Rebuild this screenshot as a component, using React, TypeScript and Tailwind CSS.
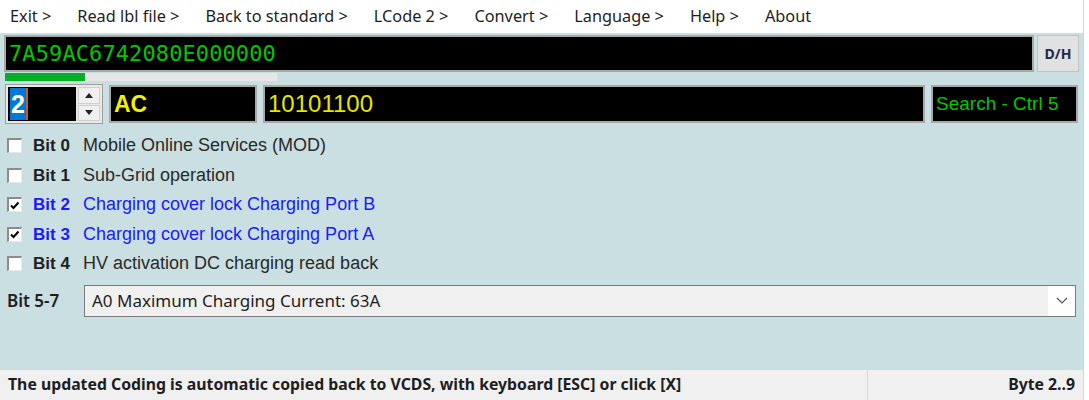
import React from 'react';

type Bit = { n: number; label: string; on: boolean };

const bits: Bit[] = [
  { n: 0, label: 'Mobile Online Services (MOD)', on: false },
  { n: 1, label: 'Sub-Grid operation', on: false },
  { n: 2, label: 'Charging cover lock Charging Port B', on: true },
  { n: 3, label: 'Charging cover lock Charging Port A', on: true },
  { n: 4, label: 'HV activation DC charging read back', on: false },
];

const menu = ['Exit >', 'Read lbl file >', 'Back to standard >', 'LCode 2 >', 'Convert >', 'Language >', 'Help >', 'About'];

const CheckBox = ({ on }: { on: boolean }) => (
  <div className="w-[15px] h-[15px] bg-white border-t-2 border-l-2 border-b border-r border-t-[#8c8c8c] border-l-[#8c8c8c] border-b-[#e8e8e8] border-r-[#e8e8e8] flex items-center justify-center">
    {on && (
      <svg width="10" height="9" viewBox="0 0 10 9">
        <path d="M1 4.5 L3.5 7 L8.5 1.5" fill="none" stroke="#000" strokeWidth="2" />
      </svg>
    )}
  </div>
);

export default function App() {
  return (
    <div className="w-[1089px] h-[400px] flex bg-white overflow-hidden" style={{ fontFamily: '"Noto Sans", sans-serif' }}>
      <div className="w-[1083px] h-full flex flex-col bg-[#c9dfe1]">
        {/* menu */}
        <div className="h-[33px] bg-white flex items-center pl-[10px] gap-[26px] text-[16.3px] text-[#1e1e1e]">
          {menu.map((m) => (
            <span key={m}>{m}</span>
          ))}
        </div>

        {/* coding string */}
        <div className="flex items-stretch gap-[3px] mt-[2px] pl-[4px] pr-[4px] h-[37px]">
          <div className="flex-1 bg-black border-2 border-[#a8a8a8] flex items-center pl-[3px] text-[#00c800] text-[22px] leading-none" style={{ fontFamily: '"DejaVu Sans Mono", monospace', letterSpacing: '0.1px' }}>
            7A59AC6742080E000000
          </div>
          <button className="w-[42px] bg-[#e1e1e1] border border-[#c4c4c4] font-bold text-[14px] text-[#1e2a48]">D/H</button>
        </div>

        {/* progress */}
        <div className="ml-[5px] mt-[1px] w-[272px] h-[8px] bg-[#e6e6e6] flex">
          <div className="w-[80px] h-full bg-[#06b025]" />
        </div>

        {/* byte row */}
        <div className="flex items-center mt-[3px] h-[40px] pl-[5px] pr-[5px] gap-[6px]" style={{ fontFamily: '"Liberation Sans", Arial, sans-serif' }}>
          <div className="w-[98px] h-[40px] border border-[#9e9e9e] bg-[#e8e8e8] flex items-center p-[2px] gap-[2px]">
            <div className="w-[68px] h-full bg-black flex items-center pl-[2px]">
              <span className="bg-[#0078d7] text-white font-bold text-[25px] leading-[32px] px-[1px]">2</span>
              <span className="w-[2px] h-[32px] bg-[#c06020]" />
            </div>
            <div className="flex flex-col gap-[1px] h-full w-[22px]">
              <div className="flex-1 bg-[#f0f0f0] border border-[#d0d0d0] flex items-center justify-center">
                <svg width="8" height="5" viewBox="0 0 8 5"><path d="M4 0 L8 5 L0 5 Z" fill="#222" /></svg>
              </div>
              <div className="flex-1 bg-[#f0f0f0] border border-[#d0d0d0] flex items-center justify-center">
                <svg width="8" height="5" viewBox="0 0 8 5"><path d="M0 0 L8 0 L4 5 Z" fill="#222" /></svg>
              </div>
            </div>
          </div>
          <div className="w-[148px] h-[38px] bg-black border-2 border-[#a8a8a8] flex items-center pl-[3px] text-[#f0f000] font-bold text-[23px]">AC</div>
          <div className="w-[662px] h-[38px] bg-black border-2 border-[#a8a8a8] flex items-center pl-[3px] text-[#e6e600] text-[24px]">10101100</div>
          <div className="flex-1 h-[38px] bg-black border-2 border-[#a8a8a8] flex items-center pl-[3px] text-[#00c800] text-[19px]">Search - Ctrl 5</div>
        </div>

        {/* bits */}
        <div className="flex flex-col mt-[7px]" style={{ fontFamily: '"Liberation Sans", Arial, sans-serif' }}>
          {bits.map((b) => (
            <div key={b.n} className="h-[29.5px] flex items-center pl-[7px]">
              <CheckBox on={b.on} />
              <span className={`ml-[11px] w-[50px] font-bold text-[17px] ${b.on ? 'text-[#1a1aff]' : 'text-[#1e1e1e]'}`}>Bit {b.n}</span>
              <span className={`text-[18px] ${b.on ? 'text-[#1a1aff]' : 'text-[#2a2a2a]'}`}>{b.label}</span>
            </div>
          ))}
        </div>

        {/* bit 5-7 */}
        <div className="flex items-center mt-[6px] pl-[7px] pr-[7px] h-[32px]">
          <span className="w-[77px] font-semibold text-[17px] text-[#1e1e1e]">Bit 5-7</span>
          <div className="flex-1 h-[32px] bg-[#f0f0f0] border border-[#7a7a7a] flex items-center">
            <span className="flex-1 pl-[7px] text-[17px] text-[#1e1e1e]">A0 Maximum Charging Current: 63A</span>
            <div className="w-[27px] h-full bg-white flex items-center justify-center">
              <svg width="12" height="7" viewBox="0 0 12 7"><path d="M1 1 L6 6 L11 1" fill="none" stroke="#555" strokeWidth="1.2" /></svg>
            </div>
          </div>
        </div>

        <div className="flex-1" />

        {/* status bar */}
        <div className="h-[30px] bg-[#f0f0f0] flex items-center text-[15.8px] font-bold text-[#1e1e1e]">
          <div className="w-[868px] pl-[8px] border-r border-[#d8d8d8] h-full flex items-center">
            The updated Coding is automatic copied back to VCDS, with keyboard [ESC] or click [X]
          </div>
          <div className="flex-1 text-right pr-[8px]">Byte 2..9</div>
        </div>
      </div>
      <div className="flex-1 bg-white border-l border-[#d4d4d4]" />
    </div>
  );
}
